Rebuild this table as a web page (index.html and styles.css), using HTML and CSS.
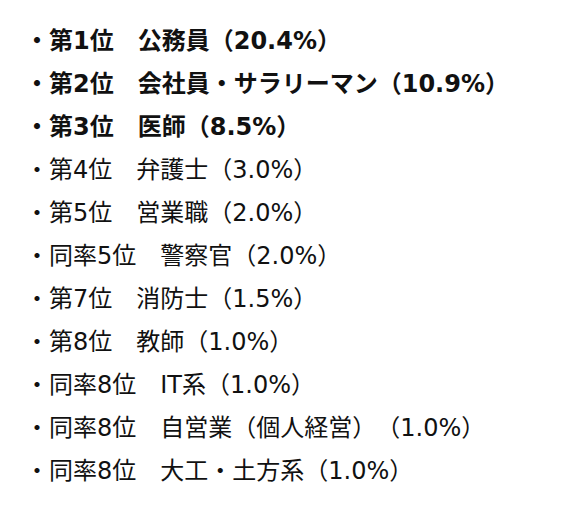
FILE: index.html
```html
<!DOCTYPE html>
<html lang="ja">
<head>
<meta charset="utf-8">
<link rel="stylesheet" href="styles.css">
</head>
<body>
<ul class="ranking">
  <li class="top">・第1位　公務員（20.4%）</li>
  <li class="top">・第2位　会社員・サラリーマン（10.9%）</li>
  <li class="top">・第3位　医師（8.5%）</li>
  <li>・第4位　弁護士（3.0%）</li>
  <li>・第5位　営業職（2.0%）</li>
  <li>・同率5位　警察官（2.0%）</li>
  <li>・第7位　消防士（1.5%）</li>
  <li>・第8位　教師（1.0%）</li>
  <li>・同率8位　IT系（1.0%）</li>
  <li>・同率8位　自営業（個人経営）（1.0%）</li>
  <li>・同率8位　大工・土方系（1.0%）</li>
</ul>
</body>
</html>
```
FILE: styles.css
```css
html, body {
  margin: 0;
  padding: 0;
  background: #fff;
}
.ranking {
  list-style: none;
  margin: 0;
  padding: 20px 0 0 25px;
  font-family: "DejaVu Sans", "Noto Sans CJK JP", sans-serif;
  font-size: 24px;
  line-height: 43px;
  color: #111;
  text-spacing-trim: space-all;
}
.ranking li {
  white-space: nowrap;
}
.ranking .top {
  font-weight: 700;
}
```
